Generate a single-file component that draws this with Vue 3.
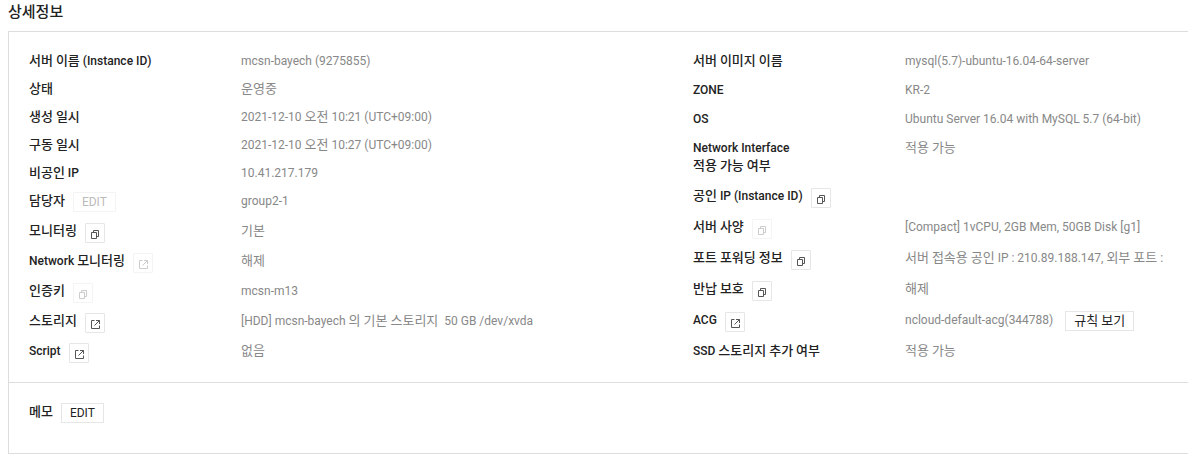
<script setup>
import { h } from 'vue'

const left = [
  { label: '서버 이름 (Instance ID)', value: 'mcsn-bayech (9275855)' },
  { label: '상태', value: '운영중' },
  { label: '생성 일시', value: '2021-12-10 오전 10:21 (UTC+09:00)' },
  { label: '구동 일시', value: '2021-12-10 오전 10:27 (UTC+09:00)' },
  { label: '비공인 IP', value: '10.41.217.179' },
  { label: '담당자', value: 'group2-1', edit: true, disabled: true },
  { label: '모니터링', value: '기본', icon: 'popup' },
  { label: 'Network 모니터링', value: '해제', icon: 'link', disabled: true },
  { label: '인증키', value: 'mcsn-m13', icon: 'popup', disabled: true },
  { label: '스토리지', value: '[HDD] mcsn-bayech 의 기본 스토리지\u00a0 50 GB /dev/xvda', icon: 'link' },
  { label: 'Script', value: '없음', icon: 'link' },
]

const right = [
  { label: '서버 이미지 이름', value: 'mysql(5.7)-ubuntu-16.04-64-server' },
  { label: 'ZONE', value: 'KR-2' },
  { label: 'OS', value: 'Ubuntu Server 16.04 with MySQL 5.7 (64-bit)' },
  { label: 'Network Interface\n적용 가능 여부', value: '적용 가능', tall: true },
  { label: '공인 IP (Instance ID)', value: '', icon: 'popup' },
  { label: '서버 사양', value: '[Compact] 1vCPU, 2GB Mem, 50GB Disk [g1]', icon: 'popup', disabled: true },
  { label: '포트 포워딩 정보', value: '서버 접속용 공인 IP : 210.89.188.147, 외부 포트 :', icon: 'popup' },
  { label: '반납 보호', value: '해제', icon: 'popup' },
  { label: 'ACG', value: 'ncloud-default-acg(344788)', icon: 'link', action: '규칙 보기' },
  { label: 'SSD 스토리지 추가 여부', value: '적용 가능' },
]

const columns = [
  { name: 'left', rows: left },
  { name: 'right', rows: right },
]

const icons = {
  popup: 'M2.5 4.5h5v6h-5zM4.5 4.5v-2h5v6h-2',
  link: 'M5.5 2.5h-3v8h8v-3M5.5 7.5l5-5M7 2.5h3.5V6',
}

// Hangul runs are set one size larger so they balance with Roboto.
const Mixed = (props) =>
  h(
    'span',
    { class: 'mixed' },
    props.text
      .split(/([\uac00-\ud7a3]+)/)
      .filter(Boolean)
      .map((part) => (/[\uac00-\ud7a3]/.test(part) ? h('span', { class: 'ko', lang: 'ko' }, part) : part)),
  )
Mixed.props = ['text']
</script>

<template>
  <main class="page">
    <h1 class="title">상세정보</h1>
    <section class="panel">
      <div class="details">
        <dl v-for="col in columns" :key="col.name" class="list" :class="col.name">
          <div
            v-for="row in col.rows"
            :key="row.label"
            class="row"
            :class="{ control: row.icon || row.edit, tall: row.tall }"
          >
            <dt>
              <Mixed :text="row.label" />
              <button v-if="row.edit" type="button" class="btn" :disabled="row.disabled">EDIT</button>
              <button
                v-if="row.icon"
                type="button"
                class="btn icon"
                :disabled="row.disabled"
                :aria-label="row.label"
              >
                <svg width="12" height="12" viewBox="0 0 12 12" aria-hidden="true">
                  <path :d="icons[row.icon]" />
                </svg>
              </button>
            </dt>
            <dd>
              <Mixed :text="row.value" />
              <button v-if="row.action" type="button" class="btn action"><Mixed :text="row.action" /></button>
            </dd>
          </div>
        </dl>
      </div>
      <div class="memo">
        <Mixed text="메모" />
        <button type="button" class="btn">EDIT</button>
      </div>
    </section>
  </main>
</template>

<style>
body {
  background: #fff;
  overflow-x: hidden;
}
.mixed {
  white-space: pre-line;
}
.mixed .ko {
  font-size: 13px;
  line-height: 1;
}
</style>

<style scoped>
.page {
  padding: 2px 0 10px 8px;
  font-family: Roboto, 'Noto Sans CJK KR', sans-serif;
  font-size: 12px;
  line-height: 18px;
  color: #222;
}
.title {
  margin: 0 0 9px;
  font-size: 15px;
  line-height: 20px;
  font-weight: 500;
}
.panel {
  border: 1px solid #ddd;
  border-right: 0;
}
.details {
  display: grid;
  grid-template-columns: minmax(0, 664fr) minmax(0, 495fr);
  padding: 20px 0 10px 20px;
}
.list {
  margin: 0;
}
.row {
  display: grid;
  grid-template-columns: 212px minmax(0, 1fr);
  align-items: start;
}
.left .row {
  padding-bottom: 10px;
}
.left .control {
  height: 30px;
  padding-bottom: 0;
}
.right .row {
  padding-bottom: 11px;
}
.right .tall {
  padding-bottom: 12px;
}
.right .row:last-child {
  padding-bottom: 10px;
}
.right .control {
  height: 31px;
  padding-bottom: 0;
}
dt,
dd,
.memo {
  display: flex;
  align-items: flex-start;
  gap: 8px;
  margin: 0;
}
dt,
.memo {
  font-weight: 500;
}
dd {
  color: #888;
}
.btn {
  box-sizing: border-box;
  height: 20px;
  padding: 0 8px;
  border: 1px solid #e6e6e6;
  background: #fff;
  color: #222;
  font-family: inherit;
  font-size: 12px;
  line-height: 18px;
  font-weight: 400;
  cursor: pointer;
}
.btn:disabled {
  border-color: #f4f4f4;
  color: #bbb;
  cursor: default;
}
.icon {
  display: grid;
  place-items: center;
  width: 20px;
  margin-top: 1px;
  padding: 2px 0 0;
  border-radius: 1px;
  color: #555;
}
.icon:disabled {
  color: #ccc;
}
.icon path {
  fill: none;
  stroke: currentColor;
  stroke-width: 1;
}
.action {
  margin-left: 4px;
}
.memo {
  border-top: 1px solid #ddd;
  padding: 20px 20px 30px;
}
</style>
